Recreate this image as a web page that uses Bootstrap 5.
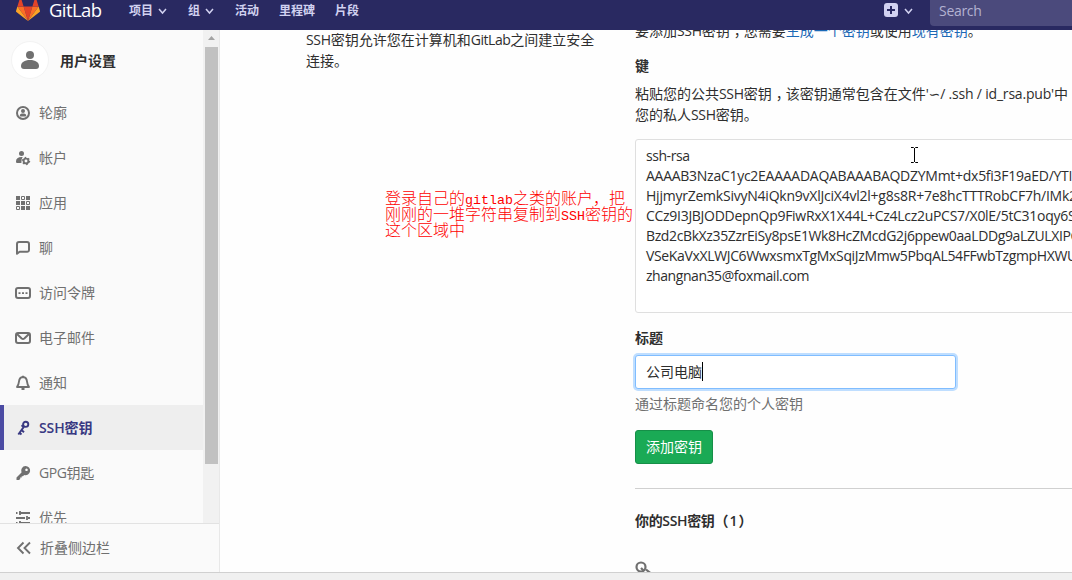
<!DOCTYPE html>
<html lang="zh-CN">
<head>
<meta charset="utf-8">
<title>SSH密钥 · 用户设置 · GitLab</title>
<link href="https://cdn.jsdelivr.net/npm/bootstrap@5.3.0/dist/css/bootstrap.min.css" rel="stylesheet">
<style>
body{height:580px;font:14px/21px "Open Sans","Noto Sans CJK SC",sans-serif;color:#2e2e2e;background:#fefefe}
.latin{letter-spacing:-.35px}
.topnav{height:30px;background:#292961;color:#d1d1f0;font-size:12px;font-weight:600}
.topnav .inner{height:22px}
.topnav span{white-space:nowrap}
.topnav .brand-name{font-size:18.500px;line-height:20px;font-weight:400;color:#fff;letter-spacing:-.6px;width:80px}
.search-box{width:142px;height:30px;margin-top:-4px;background:#4b4a7c;border-radius:4px 0 0 4px;color:#b3b2d2;font-size:14px;font-weight:400;letter-spacing:-.3px;padding:4px 9px}
.side{width:220px;background:#fafafa;border-right:1px solid #e8e8e8}
.side-scroll{height:493px}
.side-menu{width:203px}
.side-head{height:60px;padding-left:11px;font-weight:600;color:#2e2e2e}
.ava{width:38px;height:38px;background:#fff;border:1px solid #f3f3f3;margin-right:11px}
.side-link{height:45px;flex:none;padding-left:15px;color:#707070;border-left:0 solid #4b4ba3}
.side-link svg{width:16px;height:16px;margin-right:8px;flex:none}
.side-link.active{background:#eee;color:#393982;font-weight:600;border-left-width:4px;padding-left:11px}
.track{width:17px;background:#f1f1f1;padding:0 2px}
.thumb{height:417px;background:#c1c1c1}
.arrow-up{height:17px}
.collapse-row{height:49px;border-top:1px solid #e2e2e2;color:#707070;padding:0 0 1px 16px}
.intro{width:329px;margin:-1px 0 0 86px;color:#2e2e2e}
.form-col{width:437px}
.para1{margin-top:-10px}
.key-label{margin:14px 0 7px}
.key-help{height:42px;margin-bottom:14px}
.keybox{width:500px;height:174px;border:1px solid #dfdfdf;border-radius:3px;padding:6px 10px;line-height:20px;background:#fff}
.keybox div{white-space:nowrap}
.ls-a{letter-spacing:-.27px}
.ls-b{letter-spacing:-.23px}
.ls-c{letter-spacing:-.29px}
.ls-d{letter-spacing:-.38px}
.ls-e{letter-spacing:-.44px}
.ls-f{letter-spacing:-.2px}
.tilde{font-family:"DejaVu Sans",sans-serif;letter-spacing:0;line-height:0}
.title-input{width:321px;height:34px;padding:0 10px 2px;border:1px solid #80bdff;border-radius:3px;box-shadow:0 0 0 2px #bfdeff;background:#fff}
.caret{width:1px;height:19px;background:#000}
.add-btn{width:78px;height:34px;background:#1aaa55;border:1px solid #168f48;border-radius:3px;color:#fff;padding:0}
.add-btn:hover{background:#168f48;color:#fff}
.lnk{color:#1b69b6}
.comma{position:relative;left:4px}
.note{left:385px;top:189px;color:#f00;font:300 16px/16px "Noto Sans CJK SC",sans-serif;white-space:nowrap}
.note div{height:16px}
.note span{font:400 13.330px/0 "Liberation Mono",monospace}
.status{height:8px;background:#f0f0f0;border-top:1px solid #d0d0d0}
.ibeam{left:911px;top:147px}
</style>
</head>
<body class="d-flex flex-column overflow-hidden position-relative">
<header class="topnav d-flex flex-shrink-0 overflow-hidden">
  <div class="inner d-flex w-100">
    <svg class="flex-shrink-0" style="margin:-4px 9px 0 16px" width="24" height="25" viewBox="0 0 24 25"><path fill="#e24329" d="M12 25L7.600 10.500h8.800z"/><path fill="#fc6d26" d="M12 25L7.600 10.500H1.400zM12 25l4.400-14.500h6.200z"/><path fill="#fca326" d="M1.400 10.500L0 15c-.1.400 0 .8.400 1.100L12 25zM22.600 10.500L24 15c.1.400 0 .8-.4 1.100L12 25z"/><path fill="#e24329" d="M1.400 10.500h6.200L5 2c-.2-.5-.8-.5-1 0zM22.600 10.500h-6.200L19 2c.2-.5.8-.5 1 0z"/></svg>
    <span class="brand-name">GitLab</span>
    <span>项目</span><svg class="mt-2 flex-shrink-0" style="margin:0 21px 0 5px" width="9" height="7"><path d="M1 1l3.500 4L8 1" fill="none" stroke="#d1d1f0" stroke-width="1.500"/></svg>
    <span>组</span><svg class="mt-2 flex-shrink-0" style="margin:0 21px 0 5px" width="9" height="7"><path d="M1 1l3.500 4L8 1" fill="none" stroke="#d1d1f0" stroke-width="1.500"/></svg>
    <span style="margin-right:20px">活动</span><span style="margin-right:20px">里程碑</span><span>片段</span>
    <svg class="ms-auto flex-shrink-0" style="margin-top:3px" width="14" height="14"><rect width="14" height="14" rx="3" fill="#d1d1f0"/><path d="M7 3v8M3 7h8" stroke="#292961" stroke-width="2"/></svg>
    <svg class="mt-2 flex-shrink-0" style="margin:0 17px 0 6px" width="9" height="7"><path d="M1 1l3.500 4L8 1" fill="none" stroke="#d1d1f0" stroke-width="1.500"/></svg>
    <div class="search-box flex-shrink-0">Search</div>
  </div>
</header>
<div class="d-flex flex-grow-1 overflow-hidden">
  <aside class="side flex-shrink-0">
    <div class="side-scroll d-flex overflow-hidden">
      <nav class="side-menu d-flex flex-column flex-shrink-0">
        <div class="side-head d-flex align-items-center flex-shrink-0">
          <div class="ava rounded-circle d-flex align-items-center justify-content-center"><svg width="18" height="18" fill="#707070"><circle cx="9" cy="4" r="4"/><path d="M0 15c0-3.500 3.500-6 9-6s9 2.500 9 6c0 2-1 3-3 3H3c-2 0-3-1-3-3z"/></svg></div>用户设置
        </div>
        <a class="side-link d-flex align-items-center text-decoration-none"><svg viewBox="0 0 16 16" fill="currentColor"><circle cx="8" cy="8" r="6" fill="none" stroke="currentColor" stroke-width="2"/><circle cx="8" cy="6" r="2"/><path d="M4.800 10.500c0-1.400 1.500-2 3.200-2s3.200.6 3.200 2c0 .8-.5 1-1 1H5.800c-.5 0-1-.2-1-1z"/></svg>轮廓</a>
        <a class="side-link d-flex align-items-center text-decoration-none"><svg viewBox="0 0 16 16" fill="currentColor"><circle cx="6.500" cy="3.500" r="2.500"/><path d="M1 11.500C1 8.500 3 7 6.500 7l1.200.1L6.600 9.500l-.2 3.500H2.500C1.500 13 1 12.500 1 11.500z"/><circle cx="11" cy="11" r="2.400" fill="none" stroke="currentColor" stroke-width="1.900"/><circle cx="11" cy="11" r="3.600" fill="none" stroke="currentColor" stroke-width="1.200" stroke-dasharray="1.600 2.170"/></svg>帐户</a>
        <a class="side-link d-flex align-items-center text-decoration-none"><svg viewBox="0 0 16 16" fill="currentColor"><path d="M1 1h4v4H1zM11 1h4v4h-4zM1 6h4v4H1zM6 6h4v4H6zM6 11h4v4H6zM11 11h4v4h-4z"/><path d="M6.500 1.500h3v3h-3zM11.500 6.500h3v3h-3zM1.500 11.500h3v3h-3z" fill="none" stroke="currentColor"/></svg>应用</a>
        <a class="side-link d-flex align-items-center text-decoration-none"><svg viewBox="0 0 16 16" fill="none" stroke="currentColor" stroke-width="2" stroke-linejoin="round"><path d="M2 13.800V4a2 2 0 0 1 2-2h8a2 2 0 0 1 2 2v6a2 2 0 0 1-2 1.800H4.600z"/></svg>聊</a>
        <a class="side-link d-flex align-items-center text-decoration-none"><svg viewBox="0 0 16 16" fill="currentColor"><rect x="1" y="3" width="14" height="10" rx="2" fill="none" stroke="currentColor" stroke-width="2"/><path d="M3.500 7.200h2v1.800h-2zM7 7.200h2v1.800H7zM10.500 7.200h2v1.800h-2z"/></svg>访问令牌</a>
        <a class="side-link d-flex align-items-center text-decoration-none"><svg viewBox="0 0 16 16" fill="none" stroke="currentColor" stroke-width="2"><rect x="1" y="3" width="14" height="10" rx="2"/><path d="M2 4l4.700 4.500q1.300 1 2.600 0L14 4"/></svg>电子邮件</a>
        <a class="side-link d-flex align-items-center text-decoration-none"><svg viewBox="0 0 16 16" fill="none" stroke="currentColor" stroke-width="1.900" stroke-linejoin="round"><path d="M8 2C5.500 2.300 4.200 4 4 6.500c-.2 2.500-.8 3.700-2 5.500h12c-1.200-1.800-1.800-3-2-5.500C11.800 4 10.500 2.300 8 2zM6.500 14h3M8 .8V2"/></svg>通知</a>
        <a class="side-link active d-flex align-items-center text-decoration-none"><svg viewBox="0 0 16 16" fill="none" stroke="currentColor" stroke-width="1.900"><circle cx="10.700" cy="4.300" r="2.600"/><path d="M9 6.600l-5.700 7.900M6.500 10L9 12.300M4.200 12.500l2.300 2M6.500 5.200l2.200 1.800"/></svg><span style="letter-spacing:-.1px">SSH密钥</span></a>
        <a class="side-link d-flex align-items-center text-decoration-none"><svg viewBox="0 0 16 16" fill="currentColor"><path fill-rule="evenodd" d="M10.500 1a4.600 4.600 0 1 1-1.300 9L8 11.200H6.700v1.400H5.200V14L4 15H1.500v-2.600l5-5A4.600 4.600 0 0 1 10.500 1zm1 2.500a1.300 1.300 0 1 0 .01 0z"/></svg><span style="letter-spacing:-.4px">GPG钥匙</span></a>
        <a class="side-link d-flex align-items-center text-decoration-none"><svg viewBox="0 0 16 16" fill="none" stroke="currentColor" stroke-width="1.800"><path d="M1 3h1.500M4 3h11M1 8h9M13 8h2M1 13h1.500M4 13h11M5 1v4M12 6v4M5 11v4"/></svg>优先</a>
      </nav>
      <div class="track flex-shrink-0">
        <div class="arrow-up text-center lh-1"><svg width="7" height="4" viewBox="0 0 7 4"><path d="M0 4L3.500 0 7 4z" fill="#a3a3a3"/></svg></div>
        <div class="thumb"></div>
      </div>
    </div>
    <div class="collapse-row d-flex align-items-center"><svg class="me-2" width="16" height="16" fill="none" stroke="currentColor" stroke-width="1.900"><path d="M7.500 2.500L2 8l5.500 5.500M14 2.500L8.500 8l5.500 5.500"/></svg>折叠侧边栏</div>
  </aside>
  <main class="d-flex flex-shrink-0">
    <div class="intro flex-shrink-0"><span class="latin">SSH</span>密钥允许您在计算机和<span class="ls-e">GitLab</span>之间建立安全<br>连接。</div>
    <div class="form-col flex-shrink-0 text-nowrap">
      <div class="para1">要添加<span class="latin">SSH</span>密钥<span class="comma">，</span>您需要<span class="lnk">生成一个密钥</span>或使用<span class="lnk">现有密钥</span>。</div>
      <div class="fw-semibold key-label">键</div>
      <div class="key-help">粘贴您的公共<span class="latin">SSH</span>密钥<span class="comma">，</span>该密钥通常包含在文件<span class="ls-f">'<span class="tilde">∽</span>/ .ssh / id_rsa.pub'</span>中<br>您的私人<span class="latin">SSH</span>密钥。</div>
      <div class="keybox">
        <div class="ls-e">ssh-rsa</div>
        <div class="ls-a">AAAAB3NzaC1yc2EAAAADAQABAAABAQDZYMmt+dx5fi3F19aED/YTI</div>
        <div class="ls-b">HjjmyrZemkSivyN4iQkn9vXlJciX4vl2l+g8s8R+7e8hcTTTRobCF7h/IMk2</div>
        <div class="ls-c">CCz9I3JBJODDepnQp9FiwRxX1X44L+Cz4Lcz2uPCS7/X0lE/5tC31oqy6S</div>
        <div class="ls-d">Bzd2cBkXz35ZzrEiSy8psE1Wk8HcZMcdG2j6ppew0aaLDDg9aLZULXIPC</div>
        <div class="latin">VSeKaVxXLWJC6WwxsmxTgMxSqiJzMmw5PbqAL54FFwbTzgmpHXWU</div>
        <div class="ls-e">zhangnan35@foxmail.com</div>
      </div>
      <div class="fw-semibold" style="margin:14px 0 7px">标题</div>
      <div class="title-input d-flex align-items-center">公司电脑<i class="caret"></i></div>
      <div style="margin:4px 0 16px;color:#707070">通过标题命名您的个人密钥</div>
      <button class="add-btn btn d-block" style="font-size:14px;padding-bottom:2px">添加密钥</button>
      <hr style="margin:24px 0 21px;border-color:#d0d0d0;opacity:1">
      <div class="fw-semibold"><span class="latin">你的SSH密钥</span><span style="letter-spacing:1px">（1）</span></div>
      <svg class="d-block" style="margin-top:30px" width="18" height="16" fill="none" stroke="#707070" stroke-width="2.200"><circle cx="6" cy="6" r="4.500"/><path d="M11 8.500l5 4M6 7l3 3"/></svg>
    </div>
  </main>
</div>
<footer class="status flex-shrink-0"></footer>
<div class="note position-absolute"><div>登录自己的<span>gitlab</span>之类的账户，把</div><div>刚刚的一堆字符串复制到<span>SSH</span>密钥的</div><div>这个区域中</div></div>
<svg class="ibeam position-absolute" width="7" height="16" fill="none" stroke="#000"><path d="M0 .5h2.500l1 1 1-1H7M3.500 1v14M0 15.500h2.500l1-1 1 1H7"/></svg>
<script src="https://cdn.jsdelivr.net/npm/bootstrap@5.3.0/dist/js/bootstrap.bundle.min.js"></script>
</body>
</html>
